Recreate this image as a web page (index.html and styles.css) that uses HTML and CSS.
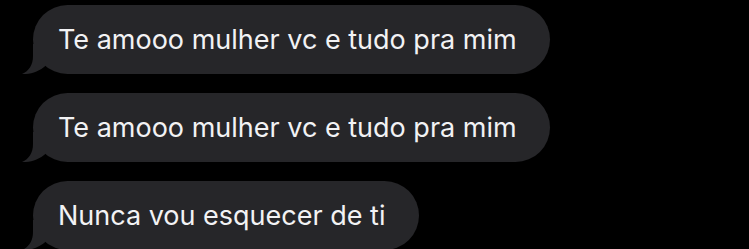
FILE: index.html
```html
<!DOCTYPE html>
<html>
<head>
<meta charset="utf-8">
<link rel="stylesheet" href="styles.css">
</head>
<body>
<div class="thread">
  <div class="bubble"><span class="text">Te amooo mulher vc e tudo pra mim</span>
    <svg class="tail" width="30" height="30" viewBox="0 0 30 30"><path d="M11 0 L11 12 C11 21 7 27 0 30 C9 30.5 17 27.5 24 21.5 L24 0 Z" fill="#262629"/></svg>
  </div>
  <div class="bubble"><span class="text">Te amooo mulher vc e tudo pra mim</span>
    <svg class="tail" width="30" height="30" viewBox="0 0 30 30"><path d="M11 0 L11 12 C11 21 7 27 0 30 C9 30.5 17 27.5 24 21.5 L24 0 Z" fill="#262629"/></svg>
  </div>
  <div class="bubble"><span class="text">Nunca vou esquecer de ti</span>
    <svg class="tail" width="30" height="30" viewBox="0 0 30 30"><path d="M11 0 L11 12 C11 21 7 27 0 30 C9 30.5 17 27.5 24 21.5 L24 0 Z" fill="#262629"/></svg>
  </div>
</div>
</body>
</html>
```
FILE: styles.css
```css
html, body {
  margin: 0;
  padding: 0;
  background: #000;
  width: 749px;
  height: 249px;
  overflow: hidden;
}
.thread {
  display: flex;
  flex-direction: column;
  align-items: flex-start;
  gap: 19px;
  padding: 5px 0 0 33px;
}
.bubble {
  position: relative;
  background: #262629;
  border-radius: 35px;
  height: 69px;
  display: flex;
  align-items: center;
  padding: 0 33px 0 25px;
  box-sizing: border-box;
}
.text {
  font-family: "Inter", "Noto Sans", sans-serif;
  font-size: 27px;
  color: #f2f2f4;
  white-space: nowrap;
  position: relative;
  z-index: 1;
}
.tail {
  position: absolute;
  left: -11px;
  bottom: 0px;
}
```
